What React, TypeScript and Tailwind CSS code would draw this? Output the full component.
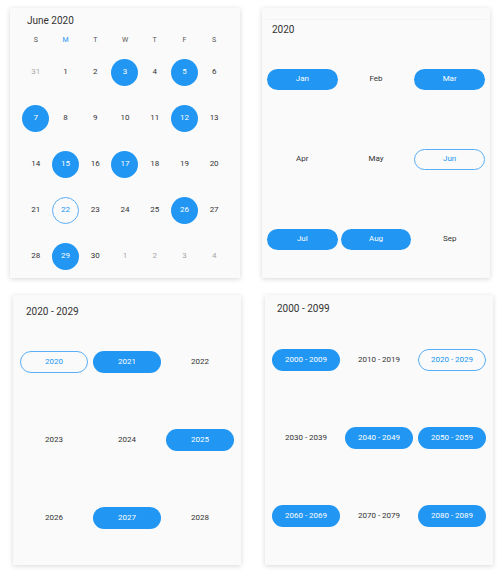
import React from 'react';

type Cell = { label: string; state?: 'selected' | 'today' | 'muted' };

const card = 'bg-[#fafafa] shadow-[0_1px_5px_rgba(0,0,0,0.16)] h-[270px]';

const Pill: React.FC<{ cell: Cell; h: string }> = ({ cell, h }) => {
  if (cell.state === 'selected') {
    return (
      <div className={`w-full ${h} rounded-full bg-[#2196f3] text-white flex items-center justify-center`}>
        {cell.label}
      </div>
    );
  }
  if (cell.state === 'today') {
    return (
      <div className={`w-full ${h} rounded-full border border-[#5aaef5] text-[#2196f3] flex items-center justify-center`}>
        {cell.label}
      </div>
    );
  }
  return <div className={`w-full ${h} text-[#333] flex items-center justify-center`}>{cell.label}</div>;
};

const days: Cell[][] = [
  [{ label: '31', state: 'muted' }, { label: '1' }, { label: '2' }, { label: '3', state: 'selected' }, { label: '4' }, { label: '5', state: 'selected' }, { label: '6' }],
  [{ label: '7', state: 'selected' }, { label: '8' }, { label: '9' }, { label: '10' }, { label: '11' }, { label: '12', state: 'selected' }, { label: '13' }],
  [{ label: '14' }, { label: '15', state: 'selected' }, { label: '16' }, { label: '17', state: 'selected' }, { label: '18' }, { label: '19' }, { label: '20' }],
  [{ label: '21' }, { label: '22', state: 'today' }, { label: '23' }, { label: '24' }, { label: '25' }, { label: '26', state: 'selected' }, { label: '27' }],
  [{ label: '28' }, { label: '29', state: 'selected' }, { label: '30' }, { label: '1', state: 'muted' }, { label: '2', state: 'muted' }, { label: '3', state: 'muted' }, { label: '4', state: 'muted' }],
];

const months: Cell[][] = [
  [{ label: 'Jan', state: 'selected' }, { label: 'Feb' }, { label: 'Mar', state: 'selected' }],
  [{ label: 'Apr' }, { label: 'May' }, { label: 'Jun', state: 'today' }],
  [{ label: 'Jul', state: 'selected' }, { label: 'Aug', state: 'selected' }, { label: 'Sep' }],
];

const years: Cell[][] = [
  [{ label: '2020', state: 'today' }, { label: '2021', state: 'selected' }, { label: '2022' }],
  [{ label: '2023' }, { label: '2024' }, { label: '2025', state: 'selected' }],
  [{ label: '2026' }, { label: '2027', state: 'selected' }, { label: '2028' }],
];

const decades: Cell[][] = [
  [{ label: '2000 - 2009', state: 'selected' }, { label: '2010 - 2019' }, { label: '2020 - 2029', state: 'today' }],
  [{ label: '2030 - 2039' }, { label: '2040 - 2049', state: 'selected' }, { label: '2050 - 2059', state: 'selected' }],
  [{ label: '2060 - 2069', state: 'selected' }, { label: '2070 - 2079' }, { label: '2080 - 2089', state: 'selected' }],
];

const MonthView = () => (
  <div className={`${card} w-[230px]`}>
    <div className="h-[24px] flex items-center pl-[17px] text-[10px] text-[#333]">June 2020</div>
    <div className="grid grid-cols-7 px-[11px] h-[16px] items-center text-[7px] text-[#555]">
      {['S', 'M', 'T', 'W', 'T', 'F', 'S'].map((d, i) => (
        <div key={i} className={`text-center ${i === 1 ? 'text-[#2196f3]' : ''}`}>{d}</div>
      ))}
    </div>
    <div className="mt-[1px] px-[11px]">
      {days.map((row, r) => (
        <div key={r} className="grid grid-cols-7 h-[46px] items-center text-[8px]">
          {row.map((c, i) => (
            <div key={i} className="flex justify-center">
              {c.state === 'selected' ? (
                <div className="w-[27px] h-[27px] rounded-full bg-[#2196f3] text-white flex items-center justify-center">{c.label}</div>
              ) : c.state === 'today' ? (
                <div className="w-[27px] h-[27px] rounded-full border border-[#5aaef5] text-[#2196f3] flex items-center justify-center">{c.label}</div>
              ) : (
                <div className={`w-[27px] h-[27px] flex items-center justify-center ${c.state === 'muted' ? 'text-[#a8a8a8]' : 'text-[#333]'}`}>{c.label}</div>
              )}
            </div>
          ))}
        </div>
      ))}
    </div>
  </div>
);

const YearView = () => (
  <div className={`${card} w-[228px]`}>
    <div className="mt-[11px] mx-[3px] border-t border-[#f3f3f3] h-[20px] flex items-center pl-[7px] text-[10px] text-[#333]">2020</div>
    <div className="px-[5px]">
      {months.map((row, r) => (
        <div key={r} className="grid grid-cols-3 gap-[3px] h-[80px] items-center text-[8px]">
          {row.map((c, i) => (
            <Pill key={i} cell={c} h="h-[21px]" />
          ))}
        </div>
      ))}
    </div>
  </div>
);

const RangeView: React.FC<{ title: string; cells: Cell[][]; head: string; pl: string }> = ({ title, cells, head, pl }) => (
  <div className={`${card} w-[228px]`}>
    <div className={`${head} ${pl} text-[10px] leading-[12px] text-[#333]`}>{title}</div>
    <div className="px-[7px]">
      {cells.map((row, r) => (
        <div key={r} className="grid grid-cols-3 gap-[5px] h-[78px] items-center text-[8px]">
          {row.map((c, i) => (
            <Pill key={i} cell={c} h="h-[22px]" />
          ))}
        </div>
      ))}
    </div>
  </div>
);

export default function App() {
  return (
    <div className="w-[501px] h-[580px] bg-white font-['Roboto',sans-serif]">
      <div className="flex pt-[8px] pl-[10px] gap-[22px]">
        <MonthView />
        <YearView />
      </div>
      <div className="flex mt-[17px] pl-[13px] gap-[24px]">
        <RangeView title="2020 - 2029" cells={years} head="h-[28px] pt-[11px]" pl="pl-[13px]" />
        <RangeView title="2000 - 2099" cells={decades} head="h-[26px] pt-[8px]" pl="pl-[12px]" />
      </div>
    </div>
  );
}
